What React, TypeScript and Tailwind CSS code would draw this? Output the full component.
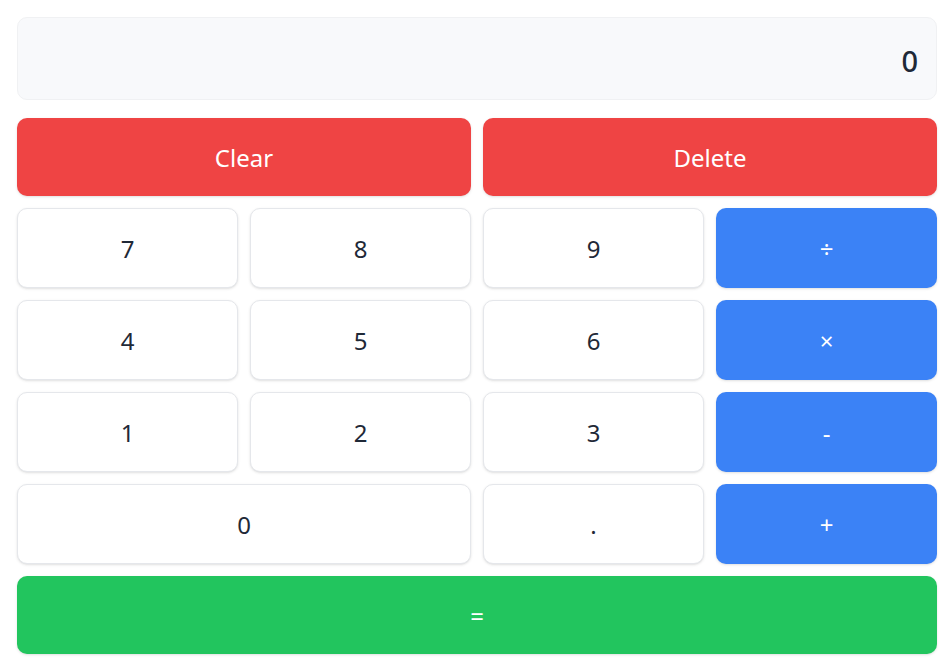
import React, { useState } from "react";

type Key = {
  label: string;
  kind: "num" | "op" | "clear" | "eq";
  span?: string;
};

const keys: Key[] = [
  { label: "Clear", kind: "clear", span: "col-span-2" },
  { label: "Delete", kind: "clear", span: "col-span-2" },
  { label: "7", kind: "num" },
  { label: "8", kind: "num" },
  { label: "9", kind: "num" },
  { label: "÷", kind: "op" },
  { label: "4", kind: "num" },
  { label: "5", kind: "num" },
  { label: "6", kind: "num" },
  { label: "×", kind: "op" },
  { label: "1", kind: "num" },
  { label: "2", kind: "num" },
  { label: "3", kind: "num" },
  { label: "-", kind: "op" },
  { label: "0", kind: "num", span: "col-span-2" },
  { label: ".", kind: "num" },
  { label: "+", kind: "op" },
  { label: "=", kind: "eq", span: "col-span-4" },
];

const App = () => {
  const [display, setDisplay] = useState("0");

  // FUNCTIONS
  const press = (k: Key) => {
    if (k.label === "Clear") return setDisplay("0");
    if (k.label === "Delete")
      return setDisplay((prev) => (prev.length > 1 ? prev.slice(0, -1) : "0"));
    if (k.kind === "eq") {
      try {
        const expr = display.replace(/÷/g, "/").replace(/×/g, "*");
        // eslint-disable-next-line no-new-func
        const res = Function(`return (${expr})`)();
        setDisplay(String(res));
      } catch {
        setDisplay("Error");
      }
      return;
    }
    setDisplay((prev) => (prev === "0" && k.label !== "." ? k.label : prev + k.label));
  };

  const styleFor = (k: Key) => {
    if (k.kind === "clear") return "h-[78px] bg-[#ef4444] text-white";
    if (k.kind === "eq") return "h-[78px] bg-[#22c55e] text-white";
    if (k.kind === "op") return "h-[80px] bg-[#3b82f6] text-white";
    return "h-[80px] bg-white text-[#1f2937] border border-[#e5e7eb]";
  };

  return (
    <div
      className="w-full min-h-screen bg-white p-[17px] pr-[15px]"
      style={{ fontFamily: '"Noto Sans", "Open Sans", sans-serif' }}
    >
      <div className="h-[83px] rounded-[10px] bg-[#f8f9fb] border border-[#f0f1f3] flex items-center justify-end px-[18px] pt-[4px] mb-[18px]">
        <span className="text-[29px] font-medium text-[#1f2937]">{display}</span>
      </div>
      <div className="grid grid-cols-4 gap-3">
        {keys.map((k) => (
          <button
            key={k.label}
            onClick={() => press(k)}
            className={`${k.span ?? ""} ${styleFor(k)} rounded-[10px] shadow-sm text-[24px] pt-[2px] flex items-center justify-center`}
          >
            {k.label}
          </button>
        ))}
      </div>
    </div>
  );
};

export default App;
